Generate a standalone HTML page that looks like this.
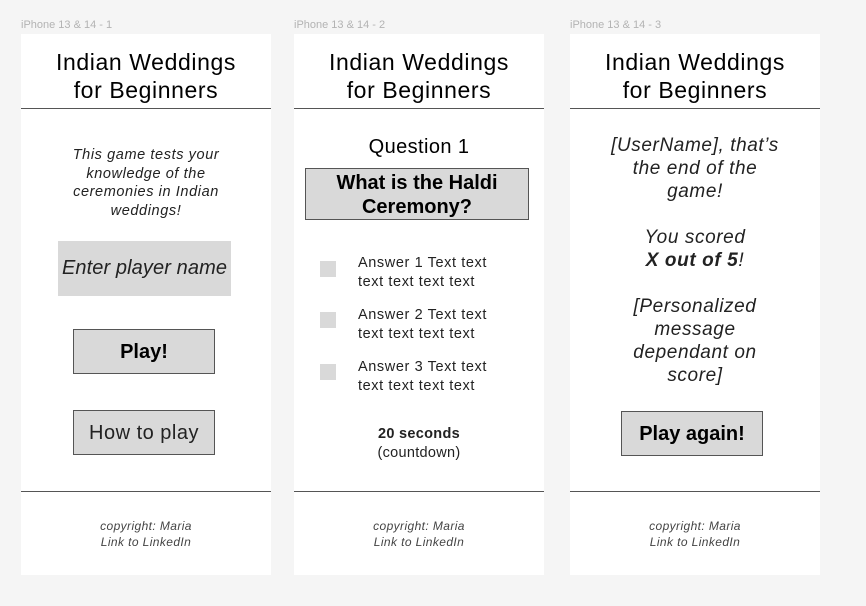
<!DOCTYPE html>
<html><head><meta charset="utf-8"><style>
*{margin:0;padding:0;box-sizing:border-box}
body{width:866px;height:606px;background:#f5f5f5;font-family:"Liberation Sans",sans-serif;position:relative;overflow:hidden;color:#000}
.lbl{position:absolute;top:19px;font-size:11px;color:#b3b3b3}
.f{position:absolute;top:34px;width:250px;height:541px;background:#fff}
.hl{position:absolute;left:0;width:250px;height:1px;background:#555}
.c{position:absolute;left:0;width:250px;text-align:center}
.t{position:absolute;white-space:nowrap}
.btn{position:absolute;background:#d9d9d9;border:1px solid #555;display:flex;align-items:center;justify-content:center;text-align:center}
.cb{position:absolute;width:16px;height:16px;background:#d9d9d9}
.ttl{top:14px;font-size:23px;line-height:28px;letter-spacing:0.6px}
</style></head><body>
<div class="lbl" style="left:21px">iPhone 13 &amp; 14 - 1</div>
<div class="lbl" style="left:294px">iPhone 13 &amp; 14 - 2</div>
<div class="lbl" style="left:570px">iPhone 13 &amp; 14 - 3</div>

<!-- frame 1 -->
<div class="f" style="left:21px">
  <div class="c ttl">Indian Weddings<br>for Beginners</div>
  <div class="hl" style="top:74px"></div>
  <div class="c" style="top:112px;font-size:14.5px;line-height:18.7px;font-style:italic;color:#222;letter-spacing:0.6px">This game tests your<br>knowledge of the<br>ceremonies in Indian<br>weddings!</div>
  <div class="btn" style="left:37px;top:207px;width:173px;height:55px;border:none;font-size:20px;font-style:italic;color:#222;white-space:nowrap;letter-spacing:0.1px">Enter player name</div>
  <div class="btn" style="left:52px;top:295px;width:142px;height:45px;font-size:20px;font-weight:bold;padding-top:2px">Play!</div>
  <div class="btn" style="left:52px;top:376px;width:142px;height:45px;font-size:20px;color:#222;letter-spacing:0.5px;padding-top:2px">How to play</div>
  <div class="hl" style="top:457px"></div>
  <div class="c" style="top:485px;font-size:12px;line-height:15.5px;font-style:italic;color:#444;letter-spacing:0.4px">copyright: Maria<br>Link to LinkedIn</div>
</div>

<!-- frame 2 -->
<div class="f" style="left:294px">
  <div class="c ttl">Indian Weddings<br>for Beginners</div>
  <div class="hl" style="top:74px"></div>
  <div class="c" style="top:102px;font-size:20px;letter-spacing:0.4px">Question 1</div>
  <div class="btn" style="left:11px;top:134px;width:224px;height:52px;font-size:20px;font-weight:bold;line-height:24px;padding-top:2px">What is the Haldi<br>Ceremony?</div>
  <div class="cb" style="left:26px;top:227px"></div>
  <div class="cb" style="left:26px;top:278px"></div>
  <div class="cb" style="left:26px;top:330px"></div>
  <div class="t" style="left:64px;top:220px;font-size:14.5px;line-height:19px;color:#222;letter-spacing:0.6px">Answer 1 Text text<br>text text text text</div>
  <div class="t" style="left:64px;top:272px;font-size:14.5px;line-height:19px;color:#222;letter-spacing:0.6px">Answer 2 Text text<br>text text text text</div>
  <div class="t" style="left:64px;top:324px;font-size:14.5px;line-height:19px;color:#222;letter-spacing:0.6px">Answer 3 Text text<br>text text text text</div>
  <div class="c" style="top:391px;font-size:14.5px;line-height:19px;color:#222;letter-spacing:0.3px"><b>20 seconds</b><br>(countdown)</div>
  <div class="hl" style="top:457px"></div>
  <div class="c" style="top:485px;font-size:12px;line-height:15.5px;font-style:italic;color:#444;letter-spacing:0.4px">copyright: Maria<br>Link to LinkedIn</div>
</div>

<!-- frame 3 -->
<div class="f" style="left:570px">
  <div class="c ttl">Indian Weddings<br>for Beginners</div>
  <div class="hl" style="top:74px"></div>
  <div class="c" style="top:100px;font-size:19px;line-height:23px;font-style:italic;color:#222;letter-spacing:0.6px">[UserName], that’s<br>the end of the<br>game!<br><br>You scored<br><b>X out of 5</b>!<br><br>[Personalized<br>message<br>dependant on<br>score]</div>
  <div class="btn" style="left:51px;top:377px;width:142px;height:45px;font-size:20px;font-weight:bold;padding-top:2px">Play again!</div>
  <div class="hl" style="top:457px"></div>
  <div class="c" style="top:485px;font-size:12px;line-height:15.5px;font-style:italic;color:#444;letter-spacing:0.4px">copyright: Maria<br>Link to LinkedIn</div>
</div>
</body></html>
